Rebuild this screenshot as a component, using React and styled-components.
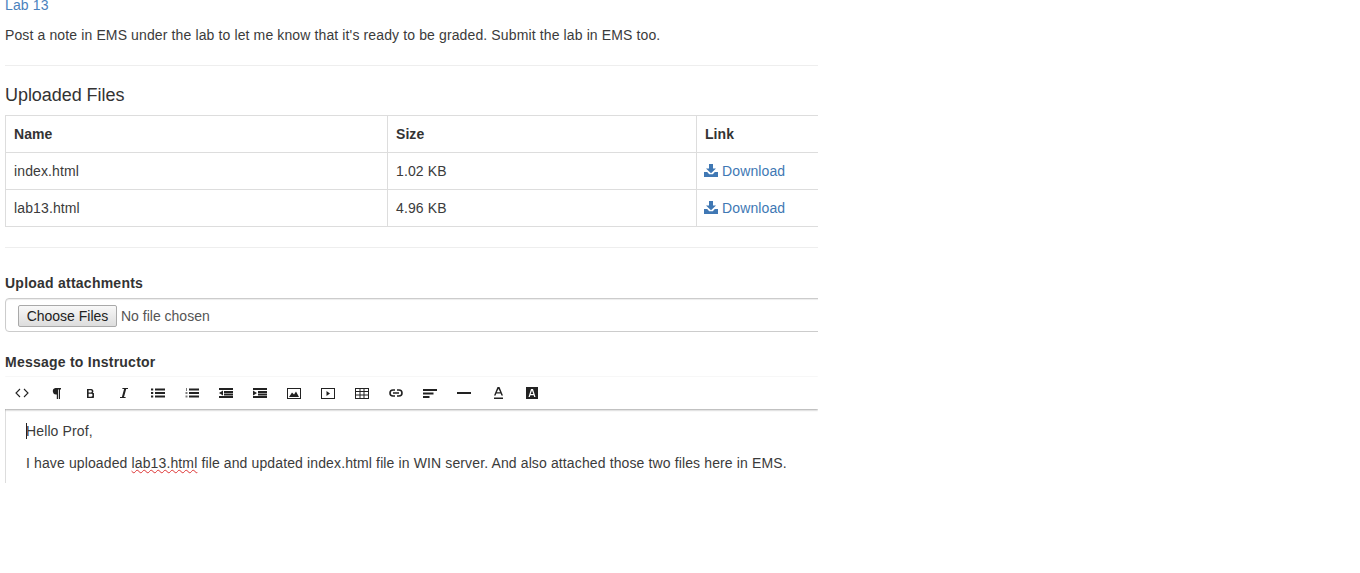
import React from "react";
import styled, { createGlobalStyle } from "styled-components";

const GlobalStyle = createGlobalStyle`
  html, body {
    margin: 0;
    padding: 0;
    background: #fff;
    overflow: hidden;
  }
  body {
    font-family: "Liberation Sans", Arial, sans-serif;
    font-size: 14px;
    line-height: 20px;
    letter-spacing: 0.125px;
    color: #3b3b3b;
  }
`;

const Page = styled.main`
  width: 813px;
  margin: -5px 0 0 5px;
  overflow: hidden;
`;

const LabLink = styled.a`
  display: block;
  color: #4a82bd;
  text-decoration: none;
`;

const Note = styled.p`
  margin: 10px 0 20px;
`;

const Rule = styled.hr`
  height: 1px;
  margin: 0;
  border: 0;
  background: #eee;
`;

const Heading = styled.h4`
  margin: 19px 0 10px;
  font-size: 18px;
  font-weight: 500;
  line-height: 20px;
  letter-spacing: -0.05px;
  color: #333;
`;

const FilesTable = styled.table`
  width: 830px;
  table-layout: fixed;
  border-collapse: collapse;
  border: 1px solid #ddd;
  margin-bottom: 20px;

  th, td {
    box-sizing: border-box;
    height: 37px;
    padding: 8px;
    border: 1px solid #ddd;
    text-align: left;
  }

  th {
    color: #333;
    letter-spacing: 0.05px;
  }
`;

const DownloadLink = styled.a`
  display: inline-flex;
  align-items: center;
  gap: 4px;
  height: 20px;
  vertical-align: top;
  margin-left: -1px;
  color: #4078b4;
  text-decoration: none;

  svg {
    margin-top: -2px;
  }
`;

const Field = styled.div`
  margin-top: ${(p) => p.$top}px;
`;

const Label = styled.label`
  display: block;
  margin-bottom: 5px;
  font-weight: 700;
  letter-spacing: 0.24px;
  color: #333;
`;

const FileBox = styled.div`
  box-sizing: border-box;
  width: 830px;
  height: 34px;
  padding: 6px 12px;
  border: 1px solid #ccc;
  border-radius: 4px;
  box-shadow: inset 0 1px 1px rgba(0, 0, 0, 0.075);
`;

const FileInput = styled.input`
  display: block;
  font-family: "Liberation Sans", Arial, sans-serif;
  font-size: 14px;
  line-height: 20px;
  color: #555;

  &::file-selector-button {
    width: 99px;
    height: 22px;
    margin-right: 4px;
    padding: 0;
    font: inherit;
    color: #222;
    background: linear-gradient(#f8f8f8, #ddd);
    border: 1px solid #a9a9a9;
    border-radius: 2px;
  }
`;

const Toolbar = styled.div`
  position: relative;
  display: flex;
  height: 32px;
  background: #fff;
  box-shadow: 0 1px 2px rgba(0, 0, 0, 0.35), 0 0 1px rgba(0, 0, 0, 0.06);
`;

const ToolButton = styled.span`
  flex: 0 0 34px;
  display: flex;
  align-items: center;
  justify-content: center;
  color: #222;
`;

const Editor = styled.div`
  box-sizing: border-box;
  height: 74px;
  padding: 12px 0 0 20px;
  border-left: 1px solid #ddd;
  overflow: hidden;
`;

const EditorLine = styled.p`
  margin: 0 0 12px;
  white-space: nowrap;
`;

const Caret = styled.span`
  display: inline-block;
  width: 1px;
  height: 16px;
  margin-right: -1px;
  vertical-align: -3px;
  background: #222;
`;

const Misspelled = styled.span`
  text-decoration: underline wavy #d33;
  text-decoration-thickness: 1px;
  text-underline-offset: 1px;
`;

const Icon = ({ children, w = 14, h = 14 }) => (
  <svg width={w} height={h} viewBox={`0 0 ${w} ${h}`} fill="currentColor">
    {children}
  </svg>
);

const DownloadIcon = () => (
  <svg width="14" height="13" viewBox="0 0 14 13" fill="#4078b4">
    <path d="M5 0h4v4.500h3L7 9.300 2 4.500h3z" />
    <path d="M0 8h3.200l2 2.200h3.600L10.800 8H14v5H0z" />
  </svg>
);

const lines = (ys, x1 = 5, x2 = 14) => ys.map((y) => <rect key={y} x={x1} y={y} width={x2 - x1} height="2" />);

const tools = [
  <Icon key="code" w={14} h={10}><path d="M5 1 1 5l4 4M9 1l4 4-4 4" fill="none" stroke="currentColor" strokeWidth="1.1" /></Icon>,
  <Icon key="para" w={9} h={11}><path d="M3.500 0H9v1.500H8V11H6.800V1.500H6V11H4.800V6.500A3.250 3.250 0 0 1 3.500 0z" /></Icon>,
  <Icon key="bold" w={7} h={9}><path d="M0 0h4a2.300 2.300 0 0 1 1.800 3.800A2.600 2.600 0 0 1 4.300 9H0zm1.600 1.300v2.300h2.100a1.150 1.150 0 0 0 0-2.300zm0 3.500v2.900h2.500a1.450 1.450 0 0 0 0-2.900z" fillRule="evenodd" /></Icon>,
  <Icon key="italic" w={8} h={10}><path d="M2.500 0H8v1H6.200L4 9h1.600v1H0V9h1.900l2.200-8H2.300z" /></Icon>,
  <Icon key="ul" w={14} h={10}>{lines([0.5, 4, 7.500], 4)}<rect x="0" y="0.500" width="2.200" height="2" /><rect x="0" y="4" width="2.200" height="2" /><rect x="0" y="7.500" width="2.200" height="2" /></Icon>,
  <Icon key="ol" w={14} h={10}>{lines([0.5, 4, 7.500], 4)}<rect x="1" y="0" width="1" height="3" opacity=".6" /><rect x="0.500" y="4" width="2" height="2" opacity=".6" /><rect x="0.500" y="7.500" width="2" height="2" opacity=".6" /></Icon>,
  <Icon key="outdent" w={14} h={10}>{lines([0, 8], 0)}{lines([3, 5.500], 5)}<path d="M4 2.500v5L0 5z" /></Icon>,
  <Icon key="indent" w={14} h={10}>{lines([0, 8], 0)}{lines([3, 5.500], 5)}<path d="M0 2.500v5L4 5z" /></Icon>,
  <Icon key="image" w={14} h={11}><path d="M0 0h14v11H0zm1 1v9h12V1z" fillRule="evenodd" /><path d="M2 9 5 4.500l2 2 2-3 3 5.500z" /></Icon>,
  <Icon key="video" w={14} h={11}><path d="M0 0h14v11H0zm1 1v9h12V1z" fillRule="evenodd" /><path d="M5.500 3v5L9 5.500z" /></Icon>,
  <Icon key="table" w={14} h={11}><path d="M0 0h14v11H0zm1 1v2h3.500V1zm4.500 0v2h3V1zm4 0v2H13V1zM1 4v2.500h3.500V4zm4.500 0v2.500h3V4zm4 0v2.500H13V4zM1 7.500V10h3.500V7.500zm4.500 0V10h3V7.500zm4 0V10H13V7.500z" fillRule="evenodd" /></Icon>,
  <Icon key="link" w={14} h={8}><path d="M6 1H4a3 3 0 0 0 0 6h2M8 1h2a3 3 0 0 1 0 6H8M4 4h6" fill="none" stroke="currentColor" strokeWidth="1.600" /></Icon>,
  <Icon key="align" w={14} h={9}><rect width="14" height="2" /><rect y="3.500" width="10.500" height="2" /><rect y="7" width="6.500" height="2" /></Icon>,
  <Icon key="hr" w={14} h={2}><rect width="14" height="2" /></Icon>,
  <Icon key="color" w={9} h={12}><path d="M3.500 0h2L9 8.500H7.400L6.700 6.500H2.300L1.600 8.500H0zm1 1.800L2.800 5.300h3.400z" fillRule="evenodd" /><rect y="10.500" width="9" height="1.500" /></Icon>,
  <Icon key="back" w={12} h={12}><path d="M0 0h12v12H0zm5 2L2.500 10h1.300l.5-1.800h3.400l.5 1.800h1.300L7 2zm1 1.500 1.300 3.500H4.700z" fillRule="evenodd" /></Icon>,
];

const files = [
  { name: "index.html", size: "1.02 KB" },
  { name: "lab13.html", size: "4.96 KB" },
];

const App = () => {
  return (
    <>
      <GlobalStyle />
      <Page>
        <LabLink href="#">Lab 13</LabLink>
        <Note>Post a note in EMS under the lab to let me know that it's ready to be graded. Submit the lab in EMS too.</Note>
        <Rule />
        <Heading>Uploaded Files</Heading>
        <FilesTable>
          <colgroup>
            <col style={{ width: 382 }} />
            <col style={{ width: 309 }} />
            <col />
          </colgroup>
          <thead>
            <tr>
              <th>Name</th>
              <th>Size</th>
              <th>Link</th>
            </tr>
          </thead>
          <tbody>
            {files.map((f) => (
              <tr key={f.name}>
                <td>{f.name}</td>
                <td>{f.size}</td>
                <td>
                  <DownloadLink href="#"><DownloadIcon />Download</DownloadLink>
                </td>
              </tr>
            ))}
          </tbody>
        </FilesTable>
        <Rule />
        <Field $top={25}>
          <Label>Upload attachments</Label>
          <FileBox>
            <FileInput type="file" multiple />
          </FileBox>
        </Field>
        <Field $top={20}>
          <Label>Message to Instructor</Label>
          <Toolbar>{tools.map((t) => <ToolButton key={t.key}>{t}</ToolButton>)}</Toolbar>
          <Editor>
            <EditorLine><Caret />Hello Prof,</EditorLine>
            <EditorLine>
              I have uploaded <Misspelled>lab13.html</Misspelled> file and updated index.html file in WIN server. And also attached those two files here in EMS.
            </EditorLine>
          </Editor>
        </Field>
      </Page>
    </>
  );
};

export default App;
